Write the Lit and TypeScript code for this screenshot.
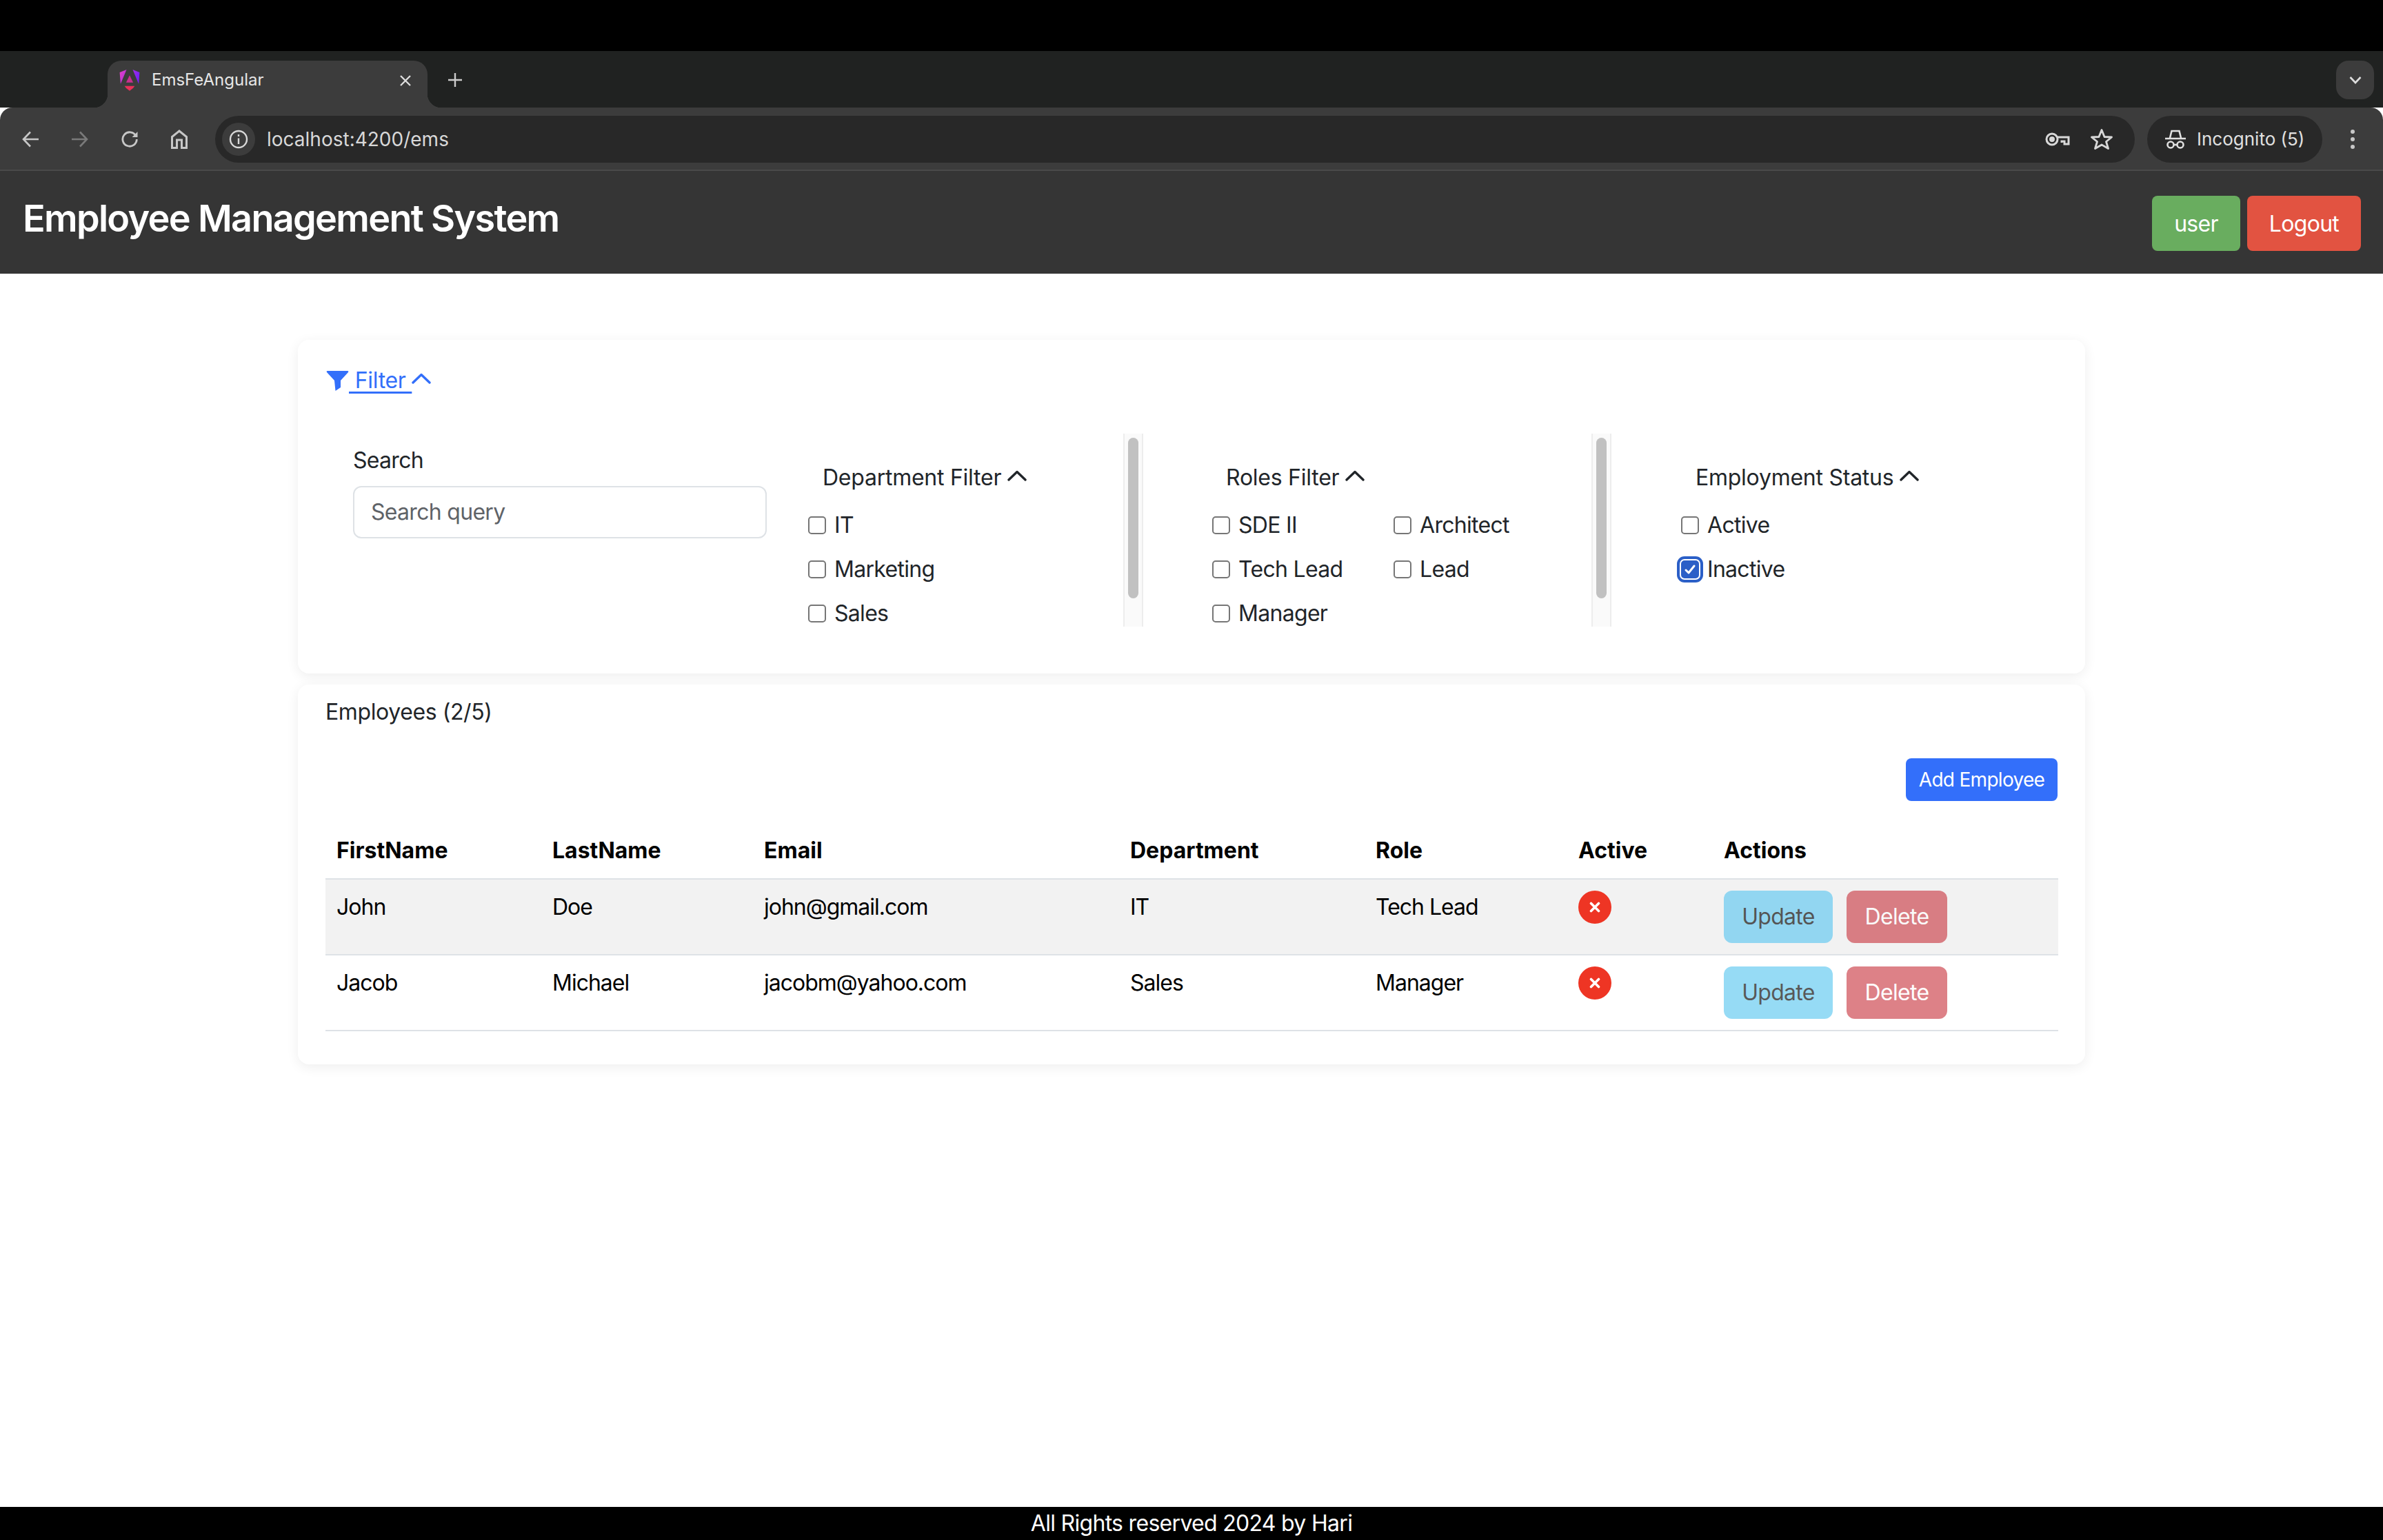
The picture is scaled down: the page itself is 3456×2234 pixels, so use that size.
import { LitElement, css, html, svg } from 'lit'
import { customElement } from 'lit/decorators.js'

const employees = [
  { first: 'John', last: 'Doe', email: 'john@gmail.com', dept: 'IT', role: 'Tech Lead' },
  { first: 'Jacob', last: 'Michael', email: 'jacobm@yahoo.com', dept: 'Sales', role: 'Manager' },
]
const columns = [
  ['FirstName', 313],
  ['LastName', 307],
  ['Email', 531],
  ['Department', 356],
  ['Role', 294],
  ['Active', 211],
  ['Actions', 501],
] as const

const chevron = svg`<svg class="chev" viewBox="0 0 28 16" fill="none" stroke="currentColor" stroke-width="3.4" stroke-linecap="round" stroke-linejoin="round"><path d="M2 14 14 2.500 26 14"/></svg>`

@customElement('app-root')
export class AppRoot extends LitElement {
  static styles = css`
    :host {
      display: flex;
      flex-direction: column;
      min-height: 2234px;
      font-family: Inter, 'Liberation Sans', sans-serif;
      font-size: 32px;
      letter-spacing: -0.7px;
      line-height: 48px;
      color: #212529;
      background: #fff;
    }
    .blackbar { height: 74px; background: #000; }
    .tabstrip {
      height: 82px;
      background: #202221;
      display: flex;
      padding: 14px 13px 0 156px;
      box-sizing: border-box;
      color: #e6e6e6;
      letter-spacing: 0;
    }
    .tab {
      position: relative;
      width: 464px;
      height: 68px;
      background: #3c3c3c;
      border-radius: 20px 20px 0 0;
      display: flex;
      align-items: flex-start;
      padding: 12px 23px 0 17px;
      box-sizing: border-box;
      font-size: 24px;
      line-height: 32px;
    }
    .tab::before, .tab::after {
      content: '';
      position: absolute;
      bottom: 0;
      width: 20px;
      height: 20px;
    }
    .tab::before { left: -20px; background: radial-gradient(circle at 0 0, #202221 20px, #3c3c3c 20.5px); }
    .tab::after { right: -20px; background: radial-gradient(circle at 100% 0, #202221 20px, #3c3c3c 20.5px); }
    .favicon { width: 30px; height: 32px; margin-right: 17px; flex: none; }
    .tab-title { flex: 1; }
    .tab-x { width: 18px; height: 18px; margin-top: 8px; color: #ddd; }
    .plus { width: 22px; height: 22px; margin: 17px 0 0 29px; color: #ccc; }
    .tab-menu {
      margin-left: auto;
      width: 55px;
      height: 56px;
      border-radius: 18px;
      background: #3c3c3c;
      display: flex;
      align-items: center;
      justify-content: center;
      color: #ddd;
    }
    .tab-menu svg { width: 18px; height: 12px; }
    .toolbar {
      height: 92px;
      background: #3c3c3c;
      border-radius: 18px 18px 0 0;
      border-bottom: 2px solid #4a4a4a;
      box-sizing: border-box;
      display: flex;
      align-items: flex-start;
      padding: 12px 40px 0 32px;
      color: #c7c7c7;
      letter-spacing: 0;
    }
    .nav { width: 24px; height: 28px; margin: 20px 48px 0 0; flex: none; }
    .nav.off { color: #7a7a7a; }
    .nav.home { margin-right: 40px; }
    .omnibox {
      flex: 1;
      height: 68px;
      background: #282828;
      border-radius: 34px;
      display: flex;
      align-items: center;
      padding: 0 32px 0 10px;
      font-size: 28px;
      color: #d8d8d8;
    }
    .info {
      width: 48px;
      height: 48px;
      border-radius: 50%;
      background: #3c3c3c;
      display: flex;
      align-items: center;
      justify-content: center;
      margin-right: 17px;
    }
    .info svg { width: 28px; height: 28px; }
    .url { flex: 1; }
    .key { width: 36px; height: 22px; margin-right: 30px; }
    .star { width: 32px; height: 32px; }
    .incognito {
      width: 254px;
      height: 68px;
      margin-left: 18px;
      background: #282828;
      border-radius: 34px;
      display: flex;
      align-items: center;
      padding-left: 26px;
      box-sizing: border-box;
      font-size: 26px;
      color: #e0e0e0;
    }
    .incognito svg { width: 30px; height: 28px; margin-right: 16px; }
    .dots { width: 8px; height: 30px; margin: 19px 0 0 40px; flex: none; }

    .appbar {
      height: 149px;
      background: #353535;
      display: flex;
      justify-content: space-between;
      padding: 0 32px 0 33px;
      box-sizing: border-box;
    }
    .appbar h1 {
      margin: 35px 0 0;
      font-size: 54px;
      line-height: 68px;
      font-weight: 600;
      letter-spacing: -1.7px;
      color: #fff;
    }
    .appbar-actions { display: flex; gap: 10px; padding-top: 36px; }
    .pill {
      height: 80px;
      border-radius: 8px;
      color: #fff;
      font-size: 32px;
      line-height: 82px;
      text-align: center;
    }
    .pill.user { width: 128px; background: #69ad5f; }
    .pill.logout { width: 165px; background: #e25341; }

    main {
      flex: 1;
      padding: 96px 432px 0;
      display: flex;
      flex-direction: column;
      gap: 16px;
    }
    .card {
      background: #fff;
      border-radius: 16px;
      box-shadow: 0 4px 18px rgba(0, 0, 0, 0.07);
    }
    .filter-card { height: 484px; padding: 35px 40px 0; box-sizing: border-box; }
    .filter-link {
      display: flex;
      align-items: center;
      color: #336ffa;
      height: 48px;
    }
    .filter-link .funnel { width: 33px; height: 29px; flex: none; margin-left: 1px; }
    .filter-link u { white-space: pre; text-underline-offset: 5px; letter-spacing: -0.3px; }
    .filter-link .chev { width: 28px; height: 16px; margin-top: -6px; }
    .filters {
      display: grid;
      grid-template-columns: 660px 486px 679px 1fr;
      margin: 53px 0 0 40px;
      height: 280px;
    }
    .search { padding-top: 15px; }
    .search label { display: block; margin-bottom: 13px; }
    .search-box {
      width: 600px;
      height: 76px;
      box-sizing: border-box;
      border: 2px solid #dee2e6;
      border-radius: 12px;
      padding: 0 24px;
      line-height: 72px;
      color: #5f6368;
    }
    .group {
      display: flex;
      overflow: hidden;
      height: 280px;
    }
    .group-body { flex: 1; padding-top: 40px; }
    .group-title {
      display: flex;
      align-items: center;
      gap: 9px;
      height: 48px;
      margin-bottom: 21px;
      letter-spacing: -0.25px;
    }
    .group-title .chev { width: 28px; height: 16px; margin-top: -6px; color: #212529; }
    .options {
      display: grid;
      grid-template-columns: 263px 263px;
      row-gap: 16px;
    }
    .options.single { grid-template-columns: 1fr; }
    .option { display: flex; align-items: center; height: 48px; }
    .box {
      width: 26px;
      height: 26px;
      border: 2.5px solid #767676;
      border-radius: 5px;
      box-sizing: border-box;
      margin-right: 12px;
      background: #fff;
      flex: none;
    }
    .box.checked {
      background: #2b5fc7;
      border-color: #2b5fc7;
      box-shadow: 0 0 0 2px #fff, 0 0 0 6px #2b5fc7;
      display: flex;
      align-items: center;
      justify-content: center;
    }
    .box.checked svg { width: 20px; height: 20px; }
    .dept .group-title { padding-left: 21px; }
    .roles .group-body { padding-left: 100px; }
    .roles .group-title { padding-left: 20px; }
    .status .group-body { padding-left: 101px; }
    .status .group-title { padding-left: 21px; }
    .track {
      width: 29px;
      box-sizing: border-box;
      border: solid #ededed;
      border-width: 0 2px;
      background: #fafafa;
      padding: 6px 5px 0;
      flex: none;
    }
    .thumb { height: 233px; border-radius: 8px; background: #c1c1c1; }

    .list-card { padding: 16px 40px 48px; }
    .list-title { letter-spacing: -0.4px; }
    .add-row { display: flex; justify-content: flex-end; margin-top: 43px; }
    .add {
      width: 220px;
      height: 62px;
      line-height: 62px;
      border-radius: 8px;
      background: #336ffa;
      color: #fff;
      font-size: 28px;
      text-align: center;
    }
    table {
      table-layout: fixed;
      width: 100%;
      border-collapse: collapse;
      margin-top: 32px;
      color: #000;
    }
    th, td {
      padding: 16px;
      text-align: left;
      vertical-align: top;
      border-bottom: 2px solid #dee2e6;
    }
    th { font-weight: 700; letter-spacing: 0; }
    td { letter-spacing: -1px; }
    tbody tr:first-child { background: #f2f2f2; }
    .off-badge {
      width: 48px;
      height: 48px;
      border-radius: 50%;
      background: #ee3524;
      display: flex;
      align-items: center;
      justify-content: center;
    }
    .off-badge svg { width: 16px; height: 16px; }
    .actions { display: flex; gap: 20px; }
    .btn {
      height: 76px;
      line-height: 76px;
      border-radius: 12px;
      text-align: center;
      opacity: 0.65;
      letter-spacing: -0.7px;
    }
    .btn.update { width: 158px; background: #5fc8f1; color: #000; }
    .btn.delete { width: 146px; background: #cb3f48; color: #fff; }
    footer {
      height: 48px;
      background: #000;
      color: #fff;
      text-align: center;
      line-height: 48px;
    }
  `

  private option(label: string, checked = false) {
    return html`<div class="option">
      <span class="box ${checked ? 'checked' : ''}">
        ${checked
          ? html`<svg viewBox="0 0 20 20" fill="none" stroke="#fff" stroke-width="3" stroke-linecap="round" stroke-linejoin="round"><path d="M4 11l4 4 8-10"/></svg>`
          : ''}
      </span>
      ${label}
    </div>`
  }

  private browserChrome() {
    return html`
      <div class="blackbar"></div>
      <div class="tabstrip">
        <div class="tab">
          <svg class="favicon" viewBox="98 88 92 100">
            <defs>
              <linearGradient id="ng" x1="0" y1="0" x2="1" y2="0.3">
                <stop offset="0" stop-color="#e640c4" />
                <stop offset="1" stop-color="#7a22f6" />
              </linearGradient>
            </defs>
            <path fill="url(#ng)" d="M130 91 99 104 103 156zM158 91 189 104 185 156z" />
            <path fill="#c9308f" d="M144 117 160 150H128z" />
            <path fill="#e8305a" d="M121 165H167L160 175 144 187 128 175z" />
          </svg>
          <span class="tab-title">EmsFeAngular</span>
          <svg class="tab-x" viewBox="0 0 18 18" stroke="currentColor" stroke-width="2.400"><path d="M2 2 16 16M16 2 2 16" /></svg>
        </div>
        <svg class="plus" viewBox="0 0 22 22" stroke="currentColor" stroke-width="2.400"><path d="M11 1V21M1 11H21" /></svg>
        <div class="tab-menu">
          <svg viewBox="0 0 18 12" fill="none" stroke="currentColor" stroke-width="2.600"><path d="M1.500 2 9 10 16.500 2" /></svg>
        </div>
      </div>
      <div class="toolbar">
        <svg class="nav" viewBox="0 0 24 28" fill="none" stroke="currentColor" stroke-width="2.600"><path d="M24 14H2.500M12 3.500 2 14 12 24.500" /></svg>
        <svg class="nav off" viewBox="0 0 24 28" fill="none" stroke="currentColor" stroke-width="2.600"><path d="M0 14H21.500M12 3.500 22 14 12 24.500" /></svg>
        <svg class="nav" viewBox="0 0 24 28" fill="none" stroke="currentColor" stroke-width="2.800"><path d="M21 9A10.200 10.200 0 1 0 22.300 14" /><path d="M23.500 3V11H15.500z" fill="currentColor" stroke="none" /></svg>
        <svg class="nav home" viewBox="0 0 24 28" fill="none" stroke="currentColor" stroke-width="3"><path d="M1.500 26.500V10.500L12 2 22.500 10.500V26.500H15.500V15H8.500V26.500z" /></svg>
        <div class="omnibox">
          <span class="info">
            <svg viewBox="0 0 28 28" fill="none" stroke="currentColor" stroke-width="2.400"><circle cx="14" cy="14" r="12" /><path d="M14 12.500V21M14 7V10" /></svg>
          </span>
          <span class="url">localhost:4200/ems</span>
          <svg class="key" viewBox="0 0 36 22" fill="none" stroke="currentColor" stroke-width="3"><circle cx="10" cy="11" r="8" /><circle cx="10" cy="11" r="2.500" fill="currentColor" /><path d="M18 8H34V18H28V14H24V16" /></svg>
          <svg class="star" viewBox="0 0 32 32" fill="none" stroke="currentColor" stroke-width="2.800" stroke-linejoin="round"><path d="M16 2.500 20 12.500 30.500 13 22.500 19.500 25.500 29.500 16 24 6.500 29.500 9.500 19.500 1.500 13 12 12.500z" /></svg>
        </div>
        <div class="incognito">
          <svg viewBox="0 0 30 28" fill="none" stroke="currentColor" stroke-width="2.600"><path d="M7 12 9.500 2H20.500L23 12M0 13H30" /><circle cx="8" cy="22" r="4.500" /><circle cx="22" cy="22" r="4.500" /><path d="M12.500 22H17.500" /></svg>
          Incognito (5)
        </div>
        <svg class="dots" viewBox="0 0 8 30" fill="currentColor"><circle cx="4" cy="4" r="3" /><circle cx="4" cy="15" r="3" /><circle cx="4" cy="26" r="3" /></svg>
      </div>
    `
  }

  render() {
    return html`
      ${this.browserChrome()}
      <header class="appbar">
        <h1>Employee Management System</h1>
        <div class="appbar-actions">
          <div class="pill user">user</div>
          <div class="pill logout">Logout</div>
        </div>
      </header>
      <main>
        <section class="card filter-card">
          <div class="filter-link">
            <svg class="funnel" viewBox="0 0 33 29" fill="currentColor"><path d="M2 0H31Q33 0 32 2L21 14V24L13.500 29 12 14 1 2Q0 0 2 0z" /></svg>
            <u> Filter </u>${chevron}
          </div>
          <div class="filters">
            <div class="search">
              <label>Search</label>
              <div class="search-box">Search query</div>
            </div>
            <div class="group dept">
              <div class="group-body">
                <div class="group-title">Department Filter ${chevron}</div>
                <div class="options single">
                  ${['IT', 'Marketing', 'Sales'].map(o => this.option(o))}
                </div>
              </div>
              <div class="track"><div class="thumb"></div></div>
            </div>
            <div class="group roles">
              <div class="group-body">
                <div class="group-title">Roles Filter ${chevron}</div>
                <div class="options">
                  ${['SDE II', 'Architect', 'Tech Lead', 'Lead', 'Manager'].map(o => this.option(o))}
                </div>
              </div>
              <div class="track"><div class="thumb"></div></div>
            </div>
            <div class="group status">
              <div class="group-body">
                <div class="group-title">Employment Status ${chevron}</div>
                <div class="options single">
                  ${this.option('Active')} ${this.option('Inactive', true)}
                </div>
              </div>
            </div>
          </div>
        </section>
        <section class="card list-card">
          <div class="list-title">Employees (2/5)</div>
          <div class="add-row"><div class="add">Add Employee</div></div>
          <table>
            <colgroup>${columns.map(c => html`<col style="width:${c[1]}px" />`)}</colgroup>
            <thead>
              <tr>${columns.map(c => html`<th>${c[0]}</th>`)}</tr>
            </thead>
            <tbody>
              ${employees.map(e => html`
                <tr>
                  <td>${e.first}</td>
                  <td>${e.last}</td>
                  <td>${e.email}</td>
                  <td>${e.dept}</td>
                  <td>${e.role}</td>
                  <td>
                    <div class="off-badge">
                      <svg viewBox="0 0 16 16" stroke="#fff" stroke-width="3.600" stroke-linecap="round"><path d="M2.500 2.500 13.500 13.500M13.500 2.500 2.500 13.500" /></svg>
                    </div>
                  </td>
                  <td>
                    <div class="actions">
                      <div class="btn update">Update</div>
                      <div class="btn delete">Delete</div>
                    </div>
                  </td>
                </tr>
              `)}
            </tbody>
          </table>
        </section>
      </main>
      <footer>All Rights reserved 2024 by Hari</footer>
    `
  }
}
